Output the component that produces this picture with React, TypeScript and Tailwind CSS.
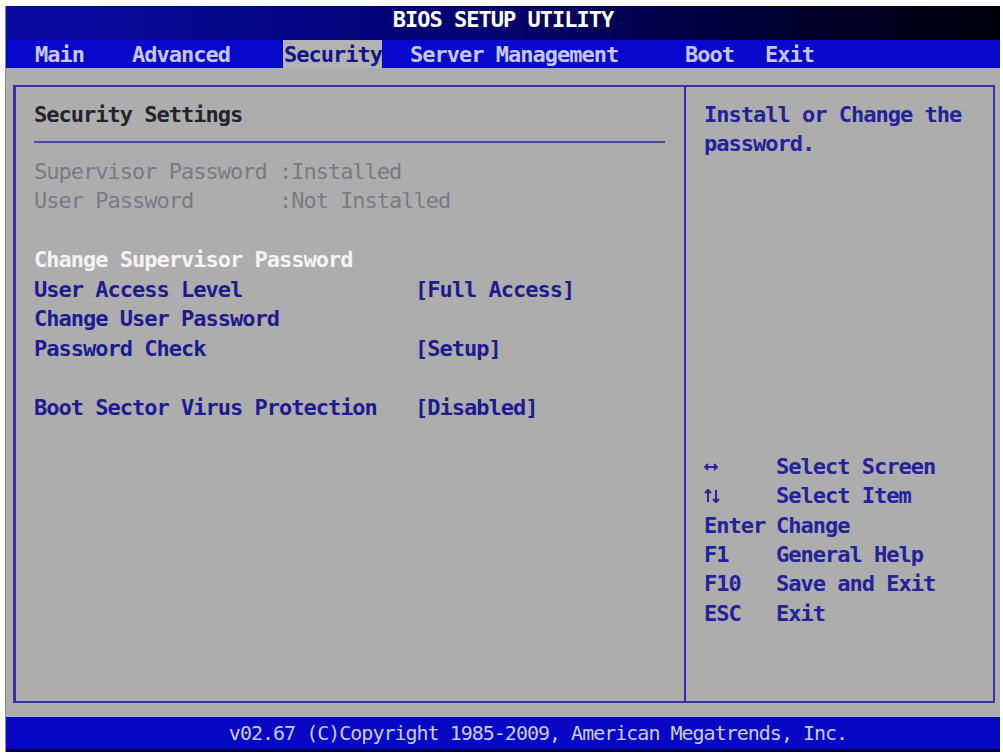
const mono = "font-['DejaVu_Sans_Mono','Liberation_Mono',monospace]";

const menu = [
  { label: "Main", w: "w-[97px]" },
  { label: "Advanced", w: "w-[151px]" },
  { label: "Security", w: "w-[127px]", active: true },
  { label: "Server Management", w: "w-[275px]" },
  { label: "Boot", w: "w-[80px]" },
  { label: "Exit", w: "w-[80px]" },
];

const LeftRight = () => (
  <svg width="14" height="10" viewBox="0 0 14 10" fill="none" stroke="currentColor" strokeWidth="1.8">
    <path d="M1 5h12M4 2L1 5l3 3M10 2l3 3-3 3" />
  </svg>
);

const UpDown = () => (
  <svg width="16" height="14" viewBox="0 0 16 14" fill="none" stroke="currentColor" strokeWidth="2">
    <path d="M4 13V1M1 4l3-3 3 3M12 1v12M9 10l3 3 3-3" />
  </svg>
);

const help: [React.ReactNode, string][] = [
  [<LeftRight />, "Select Screen"],
  [<UpDown />, "Select Item"],
  ["Enter", "Change"],
  ["F1", "General Help"],
  ["F10", "Save and Exit"],
  ["ESC", "Exit"],
];

function Row({ label, value, tone }: { label: string; value?: string; tone: string }) {
  return (
    <div className={`flex h-[29.5px] items-center whitespace-pre ${tone}`}>
      <span className="w-[381px]">{label}</span>
      {value && <span>{value}</span>}
    </div>
  );
}

export default function App() {
  return (
    <div className={`w-[1003px] h-[756px] bg-white pt-[6px] pl-[5px] ${mono} font-bold text-[22px] tracking-[-1px]`}>
      <div className="w-[995px] h-[746px] flex flex-col border-l border-[#8a8a8a] bg-[#adadad]">
        {/* title */}
        <div className="h-[34px] bg-gradient-to-r from-[#0a0aa4] via-[#03036c] to-[#00000c] flex justify-center">
          <span className="leading-[28px] text-white">BIOS SETUP UTILITY</span>
        </div>

        {/* menu bar */}
        <div className="h-[28px] bg-[#0808cc] flex items-stretch pl-[29px] text-[#c6c6f2]">
          {menu.map((m) => (
            <div key={m.label} className={`${m.w} flex items-center`}>
              {m.active ? (
                <span className="h-full flex items-center bg-[#b2b2b2] text-[#14148a] pl-[1px] pt-[1px]">{m.label}</span>
              ) : (
                <span>{m.label}</span>
              )}
            </div>
          ))}
        </div>

        {/* body */}
        <div className="flex-1 pt-[17px] pl-[7px] pr-[5px] pb-[14px]">
          <div className="h-full flex border-2 border-[#3434a6] border-l-[3px]">
            <div className="w-[668px] pl-[18px] pr-[19px] pt-[13px]">
              <div className="h-[29.5px] flex items-center text-[#23232c]">Security Settings</div>
              <div className="mt-[11px] h-[2px] bg-[#4a4aa4]" />
              <div className="mt-[14px]">
                <Row label="Supervisor Password :Installed" tone="text-[#7b7b80] font-normal" />
                <Row label="User Password       :Not Installed" tone="text-[#7b7b80] font-normal" />
                <div className="h-[29.5px]" />
                <Row label="Change Supervisor Password" tone="text-[#f4f4f4]" />
                <Row label="User Access Level" value="[Full Access]" tone="text-[#1c1c8e]" />
                <Row label="Change User Password" tone="text-[#1c1c8e]" />
                <Row label="Password Check" value="[Setup]" tone="text-[#1c1c8e]" />
                <div className="h-[29.5px]" />
                <Row label="Boot Sector Virus Protection" value="[Disabled]" tone="text-[#1c1c8e]" />
              </div>
            </div>
            <div className="w-[2px] bg-[#2c2cae]" />
            <div className="flex-1 flex flex-col pl-[18px] pt-[13px] text-[#22229a]">
              <div className="leading-[29px]">
                Install or Change the
                <br />
                password.
              </div>
              <div className="mt-[294px]">
                {help.map(([k, d]) => (
                  <div key={d} className="flex h-[29.3px] items-center">
                    <span className="w-[72px] flex items-center">{k}</span>
                    <span>{d}</span>
                  </div>
                ))}
              </div>
            </div>
          </div>
        </div>

        {/* footer */}
        <div className="h-[35px] bg-[#0808c4] border-b-[3px] border-[#00004a] flex items-center justify-center pl-[70px]">
          <span className="font-normal text-[20px] text-[#cacaf4]">
            v02.67 (C)Copyright 1985-2009, American Megatrends, Inc.
          </span>
        </div>
      </div>
    </div>
  );
}
